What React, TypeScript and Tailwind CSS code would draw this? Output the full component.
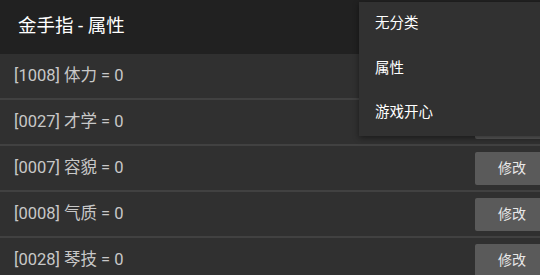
import React from "react";

const rows = [
  { id: "1008", name: "体力", value: 0 },
  { id: "0027", name: "才学", value: 0 },
  { id: "0007", name: "容貌", value: 0 },
  { id: "0008", name: "气质", value: 0 },
  { id: "0028", name: "琴技", value: 0 },
];

const menu = ["无分类", "属性", "游戏开心"];

export default function App() {
  return (
    <div
      className="relative w-[540px] h-[275px] overflow-hidden bg-[#303030]"
      style={{ fontFamily: 'Roboto, "Noto Sans CJK SC", sans-serif' }}
    >
      <div className="h-[54px] bg-[#212121] flex items-center px-[18px]">
        <span className="text-[18.5px] text-white">金手指 - 属性</span>
      </div>
      <div className="flex flex-col">
        {rows.map((r) => (
          <div
            key={r.id}
            className="h-[46px] flex items-center justify-between border-b-2 border-[#414141] pl-[14px]"
          >
            <span className="text-[16.5px] text-[#c8c8c8]">
              [{r.id}] {r.name} = {r.value}
            </span>
            <button className="h-[33px] w-[74px] -mr-[9px] rounded-[2px] bg-[#5a5a5a] text-[14px] text-[#e8e8e8]">
              修改
            </button>
          </div>
        ))}
      </div>
      <div className="absolute left-[359px] top-[2px] w-[190px] bg-[#313131] shadow-[0_2px_6px_rgba(0,0,0,0.45)]">
        {menu.map((m) => (
          <div key={m} className="h-[44.5px] flex items-center pl-[16px] text-[14.5px] text-white">
            {m}
          </div>
        ))}
      </div>
    </div>
  );
}
